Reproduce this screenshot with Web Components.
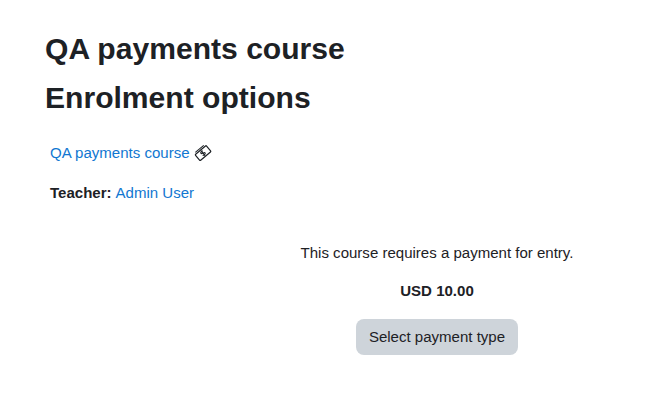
<!DOCTYPE html>
<html>
<head>
<meta charset="utf-8">
<title>Enrolment options</title>
<style>
    html, body { margin: 0; padding: 0; background: #fff; }
    body {
        font-family: "Liberation Sans", Arial, sans-serif;
        font-size: 15.04px;
        color: #1d2125;
        overflow: hidden;
    }
</style>
</head>
<body>
<enrol-page>
    <span slot="course">QA payments course</span>
    <span slot="title">Enrolment options</span>
    <course-box>
        <a-link slot="name">QA payments course</a-link>
        <ticket-icon slot="icon"></ticket-icon>
        <a-link slot="teacher">Admin User</a-link>
    </course-box>
    <payment-box cost="USD 10.00"></payment-box>
</enrol-page>

<script>
class EnrolPage extends HTMLElement {
    constructor() {
        super();
        this.attachShadow({ mode: 'open' });
    }

    connectedCallback() {
        this.shadowRoot.innerHTML = `
            <style>
                :host {
                    display: flex;
                    flex-direction: column;
                    padding: 30px 45px 0;
                }
                h2 {
                    margin: 0;
                    font-size: 30.08px;
                    font-weight: 700;
                    line-height: 38px;
                }
                h2 + h2 {
                    margin-top: 11px;
                }
            </style>
            <h2><slot name="course"></slot></h2>
            <h2><slot name="title"></slot></h2>
            <slot></slot>
        `;
    }
}

class CourseBox extends HTMLElement {
    constructor() {
        super();
        this.attachShadow({ mode: 'open' });
    }

    connectedCallback() {
        this.shadowRoot.innerHTML = `
            <style>
                :host {
                    display: flex;
                    flex-direction: column;
                    gap: 18px;
                    padding: 25px 5px 0;
                }
                .row {
                    display: flex;
                    align-items: center;
                    gap: 4px;
                    line-height: 22px;
                }
            </style>
            <div class="row"><slot name="name"></slot><slot name="icon"></slot></div>
            <div class="row"><b>Teacher:</b><slot name="teacher"></slot></div>
        `;
    }
}

class ALink extends HTMLElement {
    constructor() {
        super();
        this.attachShadow({ mode: 'open' });
    }

    connectedCallback() {
        this.shadowRoot.innerHTML = `
            <style>
                :host { display: inline-block; color: #1177d1; }
            </style>
            <slot></slot>
        `;
    }
}

class TicketIcon extends HTMLElement {
    constructor() {
        super();
        this.attachShadow({ mode: 'open' });
    }

    connectedCallback() {
        this.shadowRoot.innerHTML = `
            <style>
                :host { display: block; width: 18px; height: 18px; }
                svg { display: block; }
            </style>
            <svg width="18" height="18" viewBox="0 0 18 18" fill="none" stroke="#1d2125">
                <g transform="rotate(-40 9 9)">
                    <rect x="1.800" y="5.200" width="14.400" height="7.800" rx=".8" fill="#fff" stroke-width="1.200"/>
                    <path d="M3.500 3.600h11" stroke-width="1"/>
                    <path d="M10.200 7.400c-.6-.8-3-.8-3 .6 0 1.500 3.500.7 3.500 2.200 0 1.300-2.800 1.200-3.500.4M9 5.900v6.400" stroke-width="1.100"/>
                </g>
            </svg>
        `;
    }
}

class PaymentBox extends HTMLElement {
    constructor() {
        super();
        this.attachShadow({ mode: 'open' });
    }

    connectedCallback() {
        const cost = this.getAttribute('cost');
        this.shadowRoot.innerHTML = `
            <style>
                :host {
                    display: flex;
                    flex-direction: column;
                    align-items: center;
                    margin-left: 256px;
                    width: 272px;
                    padding-top: 38px;
                    box-sizing: border-box;
                }
                p { margin: 0; line-height: 22px; white-space: nowrap; }
                .cost { margin-top: 16px; font-weight: 700; }
                button {
                    margin-top: 17px;
                    width: 162px;
                    height: 36px;
                    border: 0;
                    border-radius: 8px;
                    background: #ced4da;
                    color: #1d2125;
                    font: inherit;
                    padding: 0 0 2px;
                }
            </style>
            <p>This course requires a payment for entry.</p>
            <p class="cost">${cost}</p>
            <button>Select payment type</button>
        `;
    }
}

customElements.define('enrol-page', EnrolPage);
customElements.define('course-box', CourseBox);
customElements.define('a-link', ALink);
customElements.define('ticket-icon', TicketIcon);
customElements.define('payment-box', PaymentBox);
</script>
</body>
</html>
